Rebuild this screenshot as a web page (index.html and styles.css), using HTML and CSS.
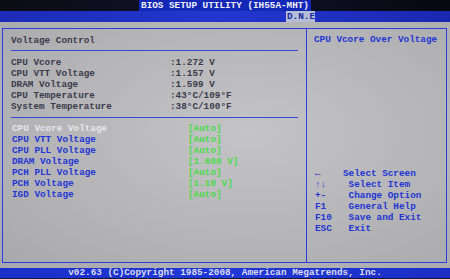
FILE: index.html
```html
<!DOCTYPE html>
<html>
<head>
<meta charset="utf-8">
<title>BIOS Setup Utility</title>
<link rel="stylesheet" href="styles.css">
</head>
<body>

<div class="titlebar"><span class="title">BIOS SETUP UTILITY (IH55A-MHT)</span></div>
<div class="tabbar"><span class="tab">D.N.E</span></div>

<div class="main">
  <div class="frame">
    <div class="left">
      <div class="heading">Voltage Control</div>
      <div class="rule"></div>

      <div class="info">
        <span>CPU Vcore</span><span>:1.272 V</span>
        <span>CPU VTT Voltage</span><span>:1.157 V</span>
        <span>DRAM Voltage</span><span>:1.599 V</span>
        <span>CPU Temperature</span><span>:43°C/109°F</span>
        <span>System Temperature</span><span>:38°C/100°F</span>
      </div>

      <div class="rule"></div>

      <div class="settings">
        <span class="sel">CPU Vcore Voltage</span><span class="val">[Auto]</span>
        <span>CPU VTT Voltage</span><span class="val">[Auto]</span>
        <span>CPU PLL Voltage</span><span class="val">[Auto]</span>
        <span>DRAM Voltage</span><span class="val">[1.600 V]</span>
        <span>PCH PLL Voltage</span><span class="val">[Auto]</span>
        <span>PCH Voltage</span><span class="val">[1.10 V]</span>
        <span>IGD Voltage</span><span class="val">[Auto]</span>
      </div>
    </div>

    <div class="right">
      <div class="help-title">CPU Vcore Over Voltage</div>
      <div class="keys">←    Select Screen
↑↓    Select Item
+-    Change Option
F1    General Help
F10   Save and Exit
ESC   Exit</div>
    </div>
  </div>
</div>

<div class="footer">v02.63 (C)Copyright 1985-2008, American Megatrends, Inc.</div>

</body>
</html>
```

FILE: styles.css
```css
* {box-sizing: border-box;}

body {
  margin: 0;
  width: 450px;
  height: 279px;
  overflow: hidden;
  background: #1a1a2a;
  font-family: "Liberation Mono", "DejaVu Sans Mono", monospace;
  font-size: 9.33px;
  font-weight: bold;
  line-height: 11px;
}

.titlebar {
  height: 11px;
  background: linear-gradient(90deg, #0c0c14, #10122a 50%, #080810);
  text-align: center;
  color: #f0f0ff;
}

.title {
  background: #1428b8;
  padding: 0 2px;
}

.tabbar {
  height: 11px;
  background: linear-gradient(90deg, #1c2cb8, #2436d0 50%, #1a28b0);
}

.tab {
  display: inline-block;
  margin-left: 286px;
  width: 29px;
  background: #b4bcd8;
  color: #1a2a9c;
  padding-left: 1px;
}

.main {
  height: 246px;
  padding: 6px 3px 5px 2px;
  background: radial-gradient(ellipse at 55% 45%, #c4c4c6, #b4b4b6 60%, #a8a8ac);
}

.frame {
  display: grid;
  grid-template-columns: 304px 1fr;
  height: 235px;
  border: 1px solid #2a3ce0;
}

.left {
  border-right: 1px solid #2a3ce0;
  padding: 6px 8px 0 8px;
  color: #3a3a4c;
}

.heading {
  margin-bottom: 4px;
}

.rule {
  height: 1px;
  background: #3446dc;
}

.info {
  display: grid;
  grid-template-columns: 159px 1fr;
  margin: 6px 0 5px 0;
}

.settings {
  display: grid;
  grid-template-columns: 176px 1fr;
  margin-top: 5px;
  padding-left: 1px;
  color: #2234d4;
}

.settings .sel {
  color: #e6e6ee;
}

.settings .val {
  color: #48dc48;
}

.right {
  padding: 5px 0 0 7px;
  color: #2234d4;
}

.help-title {
  margin-bottom: 123px;
}

.keys {
  white-space: pre;
  line-height: 11.1px;
  padding-left: 1px;
}

.footer {
  height: 10px;
  background: linear-gradient(90deg, #1a30c8, #2038d8 50%, #1a2ec4);
  color: #dcdcf4;
  text-align: center;
  line-height: 10px;
}
```
